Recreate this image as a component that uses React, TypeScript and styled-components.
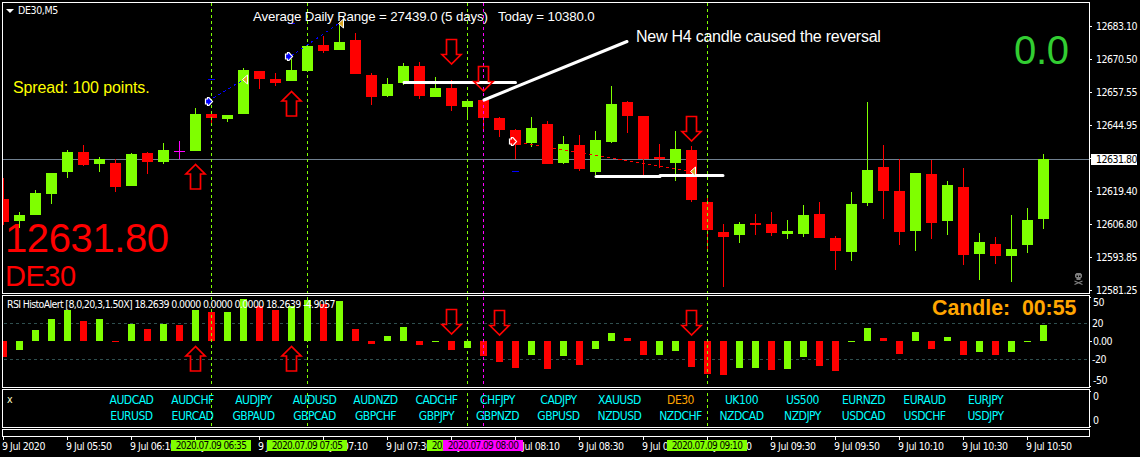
import styled, { createGlobalStyle } from "styled-components";

const LIME = "#7fff00";
const RED = "#ff0000";
const MAGENTA = "#ff00ff";

const GlobalStyle = createGlobalStyle`
  body {
    margin: 0;
    background: #000000;
    overflow: hidden;
  }
`;

// PageWrapper holds the chart windows on the left and the scales on the right
const PageWrapper = styled.div`
  box-sizing: border-box;
  width: 1140px;
  height: 457px;
  padding: 2px 0 0 2px;
  background: #000000;
  color: #ffffff;
  font-family: "DejaVu Sans Condensed", "DejaVu Sans", sans-serif;
  font-size: 10.5px;
`;

const Row = styled.div<{ $height: number; $gap?: number }>`
  display: flex;
  height: ${(p) => p.$height}px;
  margin-bottom: ${(p) => p.$gap ?? 1}px;
`;

const Panel = styled.div`
  position: relative;
  box-sizing: border-box;
  width: 1088px;
  height: 100%;
  border: 1px solid #ffffff;
  overflow: hidden;
`;

const Drawing = styled.svg`
  display: block;
  width: 1086px;
  height: 100%;
`;

// Scale Components
const Scale = styled.div<{ $pad?: number; $ends?: boolean }>`
  position: relative;
  display: flex;
  flex-direction: column;
  padding-top: ${(p) => p.$pad ?? 0}px;

  &::before,
  &::after {
    content: "";
    display: ${(p) => (p.$ends ? "block" : "none")};
    position: absolute;
    left: 0;
    width: 1px;
    height: 1px;
    background: #ffffff;
  }

  &::before {
    top: 2px;
  }

  &::after {
    bottom: 1px;
  }
`;

const ScaleItem = styled.div<{ $height: number; $tick?: boolean; $indent?: number }>`
  display: flex;
  flex-shrink: 0;
  align-items: center;
  height: ${(p) => p.$height}px;
  letter-spacing: -0.5px;
  line-height: 11px;
  white-space: nowrap;

  &::before {
    content: "";
    width: 2px;
    height: 1px;
    margin-right: ${(p) => p.$indent ?? 4}px;
    background: ${(p) => (p.$tick === false ? "transparent" : "#ffffff")};
  }
`;

const CurrentPrice = styled.div`
  position: absolute;
  left: 1091px;
  top: 154px;
  width: 41px;
  height: 11px;
  padding-left: 5px;
  background: #ffffff;
  color: #000000;
  letter-spacing: -0.5px;
  line-height: 11px;
`;

// Caption is any text written over a chart window
const Caption = styled.div<{
  $x: number;
  $y: number;
  $size: number;
  $color?: string;
  $spacing?: number;
  $bold?: boolean;
  $small?: boolean;
}>`
  position: absolute;
  left: ${(p) => p.$x}px;
  top: ${(p) => p.$y}px;
  color: ${(p) => p.$color ?? "#ffffff"};
  font-family: ${(p) => (p.$small ? "inherit" : '"Liberation Sans", Arial, sans-serif')};
  font-size: ${(p) => p.$size}px;
  font-weight: ${(p) => (p.$bold ? 700 : 400)};
  letter-spacing: ${(p) => p.$spacing ?? 0}px;
  line-height: 1;
  white-space: pre;
`;

// Symbol list
const SymbolGrid = styled.div`
  position: absolute;
  left: 98px;
  top: 2px;
  display: grid;
  grid-template-columns: repeat(15, 61px);
  grid-auto-rows: 16px;
`;

const SymbolName = styled.span<{ $active: boolean }>`
  color: ${(p) => (p.$active ? "#ffa500" : "#00ffff")};
  font-size: 12px;
  letter-spacing: -0.5px;
  line-height: 16px;
  text-align: center;
`;

// Time scale
const TimeScale = styled.div`
  position: relative;
  display: flex;
  height: 20px;
`;

const TimeItem = styled.div`
  box-sizing: border-box;
  width: 64px;
  letter-spacing: -0.45px;
  line-height: 12px;
  white-space: nowrap;

  &::before {
    content: "";
    display: block;
    width: 1px;
    height: 3px;
    margin-left: 1px;
    background: #ffffff;
  }
`;

const TimeTag = styled.div<{ $x: number; $color: string }>`
  position: absolute;
  left: ${(p) => p.$x - 42}px;
  top: 3px;
  width: 80px;
  height: 11px;
  background: ${(p) => p.$color};
  color: #000000;
  font-size: 10px;
  letter-spacing: -0.6px;
  line-height: 12px;
  text-align: center;
  white-space: nowrap;
`;

// [colour, body top, body bottom, high, low]
const candles: [string, number, number, number, number][] = [
  ["r", 199, 222, 178, 225],
  ["g", 215, 221, 212, 228],
  ["g", 193, 215, 190, 215],
  ["g", 173, 194, 173, 204],
  ["g", 152, 172, 150, 178],
  ["r", 152, 165, 145, 166],
  ["g", 159, 164, 157, 172],
  ["r", 163, 187, 159, 192],
  ["g", 154, 186, 153, 186],
  ["r", 153, 162, 152, 174],
  ["g", 150, 162, 143, 164],
  ["m", 151, 152, 141, 159],
  ["g", 114, 151, 108, 151],
  ["r", 114, 118, 114, 123],
  ["g", 115, 119, 115, 122],
  ["g", 70, 114, 68, 114],
  ["r", 71, 79, 71, 89],
  ["r", 79, 83, 73, 86],
  ["g", 70, 81, 59, 81],
  ["g", 46, 71, 46, 71],
  ["r", 45, 51, 36, 53],
  ["g", 42, 50, 24, 50],
  ["r", 40, 74, 33, 74],
  ["r", 75, 97, 73, 105],
  ["g", 84, 96, 78, 97],
  ["g", 66, 83, 63, 85],
  ["r", 66, 96, 62, 99],
  ["g", 88, 97, 77, 97],
  ["r", 88, 106, 80, 111],
  ["g", 101, 107, 101, 119],
  ["r", 100, 118, 100, 129],
  ["r", 118, 130, 117, 137],
  ["r", 130, 145, 129, 159],
  ["g", 128, 143, 117, 147],
  ["r", 124, 164, 121, 164],
  ["g", 144, 163, 136, 164],
  ["r", 145, 169, 135, 171],
  ["g", 140, 172, 131, 175],
  ["g", 104, 142, 86, 143],
  ["r", 102, 116, 101, 133],
  ["r", 116, 159, 116, 175],
  ["r", 157, 159, 144, 168],
  ["g", 149, 163, 131, 181],
  ["r", 150, 200, 146, 202],
  ["r", 202, 230, 198, 249],
  ["r", 232, 237, 224, 287],
  ["g", 224, 235, 222, 243],
  ["r", 223, 225, 214, 235],
  ["r", 224, 233, 212, 236],
  ["g", 231, 234, 220, 239],
  ["g", 215, 234, 205, 237],
  ["r", 214, 238, 202, 238],
  ["r", 238, 251, 236, 270],
  ["g", 204, 252, 192, 261],
  ["g", 170, 203, 102, 206],
  ["r", 167, 191, 145, 219],
  ["r", 191, 232, 159, 245],
  ["g", 173, 231, 173, 251],
  ["r", 174, 223, 160, 239],
  ["g", 185, 221, 181, 235],
  ["r", 187, 255, 168, 265],
  ["g", 242, 254, 233, 280],
  ["r", 244, 256, 237, 264],
  ["g", 249, 256, 215, 282],
  ["g", 220, 245, 208, 253],
  ["g", 159, 219, 154, 229],
];

// end of each histogram bar, all of them start from the zero level
const histogram = [
  357, 350, 330, 319, 310, 321, 319, 342, 324, 329, 324, 325, 310, 312, 312, 299, 306, 310, 306, 300, 304, 301,
  329, 344, 336, 327, 345, 342, 350, 348, 356, 362, 368, 355, 369, 356, 365, 349, 333, 338, 355, 355, 351, 367,
  374, 375, 368, 368, 370, 369, 357, 366, 371, 342, 328, 338, 354, 332, 349, 337, 355, 352, 355, 352, 342, 325,
];
const ZERO = 341;

const colors: Record<string, string> = { r: RED, g: LIME, m: MAGENTA };

// bars coloured differently from their candle
const barColors: Record<number, string> = { 11: RED, 41: LIME, 47: LIME };

const sessions = [
  { x: 211, label: "2020.07.09 06:35", color: LIME },
  { x: 307, label: "2020.07.09 07:05", color: LIME },
  { x: 467, label: "2020.07.09 07:55", color: LIME },
  { x: 483, label: "2020.07.09 08:00", color: MAGENTA },
  { x: 707, label: "2020.07.09 09:10", color: LIME },
];

const prices = ["12683.10", "12670.50", "12657.55", "12644.95", "", "12619.40", "12606.80", "12593.85", "12581.25"];

const symbols = [
  "AUDCAD", "AUDCHF", "AUDJPY", "AUDUSD", "AUDNZD", "CADCHF", "CHFJPY", "CADJPY", "XAUUSD", "DE30",
  "UK100", "US500", "EURNZD", "EURAUD", "EURJPY",
  "EURUSD", "EURCAD", "GBPAUD", "GBPCAD", "GBPCHF", "GBPJPY", "GBPNZD", "GBPUSD", "NZDUSD", "NZDCHF",
  "NZDCAD", "NZDJPY", "USDCAD", "USDCHF", "USDJPY",
];

const times = [
  "9 Jul 2020", "9 Jul 05:50", "9 Jul 06:10", "9 Jul 06:30", "9 Jul 06:50", "9 Jul 07:10", "9 Jul 07:30",
  "9 Jul 07:50", "9 Jul 08:10", "9 Jul 08:30", "9 Jul 08:50", "9 Jul 09:10", "9 Jul 09:30", "9 Jul 09:50",
  "9 Jul 10:10", "9 Jul 10:30", "9 Jul 10:50",
];

const SessionLines = ({ top, bottom }: { top: number; bottom: number }) => (
  <>
    {sessions.map((s) => (
      <line
        key={s.x}
        x1={s.x + 0.5}
        x2={s.x + 0.5}
        y1={top}
        y2={bottom}
        stroke={s.color}
        strokeDasharray="3 3"
        strokeDashoffset={top - 3}
      />
    ))}
  </>
);

const Arrow = ({ x, y, down }: { x: number; y: number; down?: boolean }) => (
  <path
    transform={`translate(${x + 0.5} ${y}) ${down ? "scale(1 -1) translate(0 -26)" : ""}`}
    d="M0 1 L-9.5 10.5 H-5 V25.5 H5 V10.5 H9.5 Z"
    fill="none"
    stroke={RED}
    strokeWidth={1.7}
  />
);

const Entry = ({ x, y, color }: { x: number; y: number; color: string }) => (
  <path
    transform={`translate(${x} ${y})`}
    d="M-3 -2.5 H-1 V-4 H0.5 L4 0 L0.5 4 H-1 V2.5 H-3 Z"
    fill={color}
    stroke="#ffffff"
    strokeWidth={1.2}
  />
);

const Exit = ({ x, y }: { x: number; y: number }) => (
  <path
    transform={`translate(${x} ${y})`}
    d="M-3.5 0 L1.5 -4.5 V4.5 Z"
    fill="#daa520"
    stroke="#ffffff"
    strokeWidth={1}
  />
);

const Skull = () => (
  <g transform="translate(1074 273)">
    <path
      fillRule="evenodd"
      fill="#808080"
      d="M2.500 0 H6.500 L8 1.500 V4 L6.500 5.500 V7 H2.500 V5.500 L1 4 V1.500 Z M2.500 2.500 V4 H4 V2.500 Z M5 2.500 V4 H6.500 V2.500 Z"
    />
    <path d="M0.500 8 L8.500 11.500 M8.500 8 L0.500 11.500" stroke="#808080" strokeWidth={1.2} />
  </g>
);

const App = () => {
  return (
    <PageWrapper>
      <GlobalStyle />
      <Row $height={292}>
        <Panel>
          <Drawing viewBox="3 3 1086 290">
            <rect x={3} y={159} width={1086} height={1} fill="#708090" />
            {candles.map(([c, top, bottom, high, low], i) => (
              <g key={i} fill={colors[c]} shapeRendering="crispEdges">
                <rect x={3 + i * 16} y={high} width={1} height={low - high} />
                <rect x={-2 + i * 16} y={top} width={11} height={bottom - top} />
              </g>
            ))}
            <SessionLines top={3} bottom={293} />
            <g fill="#0000ff">
              <rect x={208} y={79} width={7} height={1} />
              <rect x={288} y={23} width={7} height={1} />
              <rect x={512} y={171} width={7} height={1} />
            </g>
            <g fill="none" strokeDasharray="3 3" shapeRendering="crispEdges">
              <path d="M208 101 L243 80 M291 56 L341 22" stroke="#0000ff" />
              <path d="M512 141.500 L693 171.500" stroke={RED} />
            </g>
            <g stroke="#ffffff" strokeWidth={3} strokeLinecap="round">
              <path d="M404 82.500 H515.500 M596 176.500 H660 M660 175.500 H723 M484 100 L627 41.500" />
            </g>
            <Arrow x={195} y={163.5} />
            <Arrow x={291} y={90.5} />
            <Arrow x={451} y={39} down />
            <Arrow x={483} y={66} down />
            <Arrow x={691} y={116} down />
            <Entry x={208.5} y={101.5} color="#0000ff" />
            <Entry x={288.5} y={56.5} color="#0000ff" />
            <Entry x={512.5} y={141.5} color={RED} />
            <Exit x={246} y={79.5} />
            <Exit x={342} y={23.5} />
            <Exit x={694} y={171.5} />
            <path d="M6 9 H14 L10 13 Z" fill="#ffffff" />
            <Skull />
          </Drawing>
          <Caption $x={15} $y={2} $size={10.5} $small $spacing={-0.35}>DE30,M5</Caption>
          <Caption $x={250} $y={7} $size={13.3} $spacing={-0.15}>
            {"Average Daily Range = 27439.0 (5 days)   Today = 10380.0"}
          </Caption>
          <Caption $x={10} $y={77} $size={16} $spacing={-0.12} $color="#ffff00">Spread: 100 points.</Caption>
          <Caption $x={633} $y={26} $size={16} $spacing={-0.24}>New H4 candle caused the reversal</Caption>
          <Caption $x={1011} $y={27} $size={40} $spacing={-0.3} $color="#32cd32">0.0</Caption>
          <Caption $x={2} $y={215} $size={40} $spacing={-0.4} $color={RED}>12631.80</Caption>
          <Caption $x={2} $y={259} $size={29} $spacing={-0.5} $color={RED}>DE30</Caption>
        </Panel>
        <Scale $pad={8}>
          {prices.map((price, i) => (
            <ScaleItem key={i} $height={33}>{price}</ScaleItem>
          ))}
        </Scale>
        <CurrentPrice>12631.80</CurrentPrice>
      </Row>
      <Row $height={93}>
        <Panel>
          <Drawing viewBox="3 296 1086 91">
            <path d="M4 323.500 H1089 M4 359.500 H1089" stroke="#2f4f4f" strokeDasharray="3 3" />
            {histogram.map((end, i) => (
              <rect
                key={i}
                x={i * 16}
                y={Math.min(end, ZERO)}
                width={7}
                height={Math.abs(end - ZERO)}
                fill={barColors[i] ?? colors[candles[i][0]]}
              />
            ))}
            <SessionLines top={296} bottom={387} />
            <Arrow x={195} y={345.5} />
            <Arrow x={291} y={345.5} />
            <Arrow x={451} y={309} down />
            <Arrow x={499} y={310} down />
            <Arrow x={691} y={310} down />
          </Drawing>
          <Caption $x={4} $y={3} $size={10.5} $small $spacing={-0.64}>
            RSI HistoAlert [8,0,20,3,1.50X] 18.2639 0.0000 0.0000 0.0000 18.2639 -4.9057
          </Caption>
          <Caption $x={929} $y={2} $size={21.3} $color="#ffa500" $bold>{"Candle:  00:55"}</Caption>
        </Panel>
        <Scale $ends>
          <ScaleItem $height={14} $tick={false} $indent={1}>50</ScaleItem>
          <ScaleItem $height={28} $tick={false} $indent={0}>20</ScaleItem>
          <ScaleItem $height={9} $indent={1}>0.00</ScaleItem>
          <ScaleItem $height={27} $tick={false} $indent={0}>-20</ScaleItem>
          <ScaleItem $height={15} $tick={false} $indent={1}>-50</ScaleItem>
        </Scale>
      </Row>
      <Row $height={39}>
        <Panel>
          <Drawing viewBox="3 390 1086 37">
            <SessionLines top={390} bottom={427} />
          </Drawing>
          <Caption $x={4} $y={4} $size={10.5} $small $color="#ffffcc">x</Caption>
          <SymbolGrid>
            {symbols.map((name) => (
              <SymbolName key={name} $active={name === "DE30"}>{name}</SymbolName>
            ))}
          </SymbolGrid>
        </Panel>
        <Scale $ends>
          <ScaleItem $height={15} $tick={false} $indent={1}>0</ScaleItem>
          <ScaleItem $height={33} $tick={false} $indent={1}>0</ScaleItem>
        </Scale>
      </Row>
      <Row $height={8} $gap={0}>
        <Panel />
      </Row>
      <TimeScale>
        {times.map((time) => (
          <TimeItem key={time}>{time}</TimeItem>
        ))}
        {sessions.map((s) => (
          <TimeTag key={s.x} $x={s.x} $color={s.color}>{s.label}</TimeTag>
        ))}
      </TimeScale>
    </PageWrapper>
  );
};

export default App;
